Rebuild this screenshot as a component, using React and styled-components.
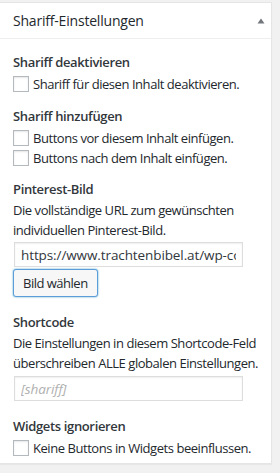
import * as React from "react"
import styled, { createGlobalStyle } from "styled-components"

const Global = createGlobalStyle`
  html, body {
    margin: 0;
    padding: 0;
    background: #f1f1f1;
  }
  body {
    font-family: "Open Sans", "Noto Sans", sans-serif;
    color: #23282d;
  }
`

const Page = styled.div`
  padding: 2px 8px 0 0;
  width: 280px;
  height: 473px;
  box-sizing: border-box;
`

const Panel = styled.section`
  background: #fff;
  border: 1px solid #e5e5e5;
  border-left: none;
  box-shadow: 0 1px 1px rgba(0, 0, 0, 0.04);
  height: 462px;
  box-sizing: border-box;
`

const Header = styled.header`
  display: flex;
  align-items: center;
  justify-content: space-between;
  height: 35px;
  padding: 0 6px 0 13px;
  border-bottom: 1px solid #eee;
`

const Title = styled.h2`
  margin: 0;
  font-size: 14px;
  font-weight: 400;
  letter-spacing: -0.2px;
`

const Toggle = styled.svg`
  width: 8px;
  height: 6px;
`

const Body = styled.div`
  padding: 13px 4px 0 13px;
  display: flex;
  flex-direction: column;
`

const Group = styled.div`
  display: flex;
  flex-direction: column;
  margin-bottom: ${p => p.$gap || 12}px;
`

const Heading = styled.h3`
  margin: 0 0 1px;
  font-size: 13px;
  font-weight: 600;
  line-height: 20px;
  letter-spacing: -0.35px;
  color: #32373c;
`

const Desc = styled.p`
  margin: 0;
  font-size: 13px;
  line-height: 20px;
  color: #23282d;
  letter-spacing: -0.45px;
`

const Checks = styled.div`
  display: flex;
  flex-direction: column;
  margin-top: 1px;
`

const CheckRow = styled.label`
  display: flex;
  align-items: center;
  gap: 4px;
  height: 20px;
  font-size: 13px;
  letter-spacing: -0.45px;
`

const Box = styled.span`
  width: 16px;
  height: 16px;
  box-sizing: border-box;
  border: 1px solid #b4b9be;
  background: #fff;
  box-shadow: inset 0 1px 2px rgba(0, 0, 0, 0.1);
  flex-shrink: 0;
`

const Field = styled.input`
  width: 229px;
  height: 25px;
  margin: ${p => p.$top || 2}px 0 0 1px;
  box-sizing: border-box;
  border: 1px solid #ddd;
  box-shadow: inset 0 1px 2px rgba(0, 0, 0, 0.07);
  padding: 0 6px;
  font-family: inherit;
  font-size: 13.5px;
  letter-spacing: -0.1px;
  color: #32373c;
  background: #fff;
  outline: none;

  &::placeholder {
    color: #b0b0b0;
    font-style: italic;
  }
`

const Button = styled.button`
  align-self: flex-start;
  height: 28px;
  padding: 0 9px;
  margin-top: 2px;
  font-family: inherit;
  font-size: 13px;
  letter-spacing: -0.5px;
  color: #23282d;
  background: #f7f7f7;
  border: 1px solid #5b9dd9;
  border-radius: 3px;
  box-shadow: 0 0 2px rgba(30, 140, 190, 0.8);
`

function Check({ children }) {
  return (
    <CheckRow>
      <Box />
      {children}
    </CheckRow>
  )
}

export default function App() {
  return (
    <Page>
      <Global />
      <Panel>
        <Header>
          <Title>Shariff-Einstellungen</Title>
          <Toggle viewBox="0 0 8 6">
            <path d="M4 0.5 L7.5 5.5 L0.5 5.5 Z" fill="#72777c" />
          </Toggle>
        </Header>
        <Body>
          <Group $gap={12}>
            <Heading>Shariff deaktivieren</Heading>
            <Checks>
              <Check>Shariff für diesen Inhalt deaktivieren.</Check>
            </Checks>
          </Group>
          <Group $gap={11}>
            <Heading>Shariff hinzufügen</Heading>
            <Checks>
              <Check>Buttons vor diesem Inhalt einfügen.</Check>
              <Check>Buttons nach dem Inhalt einfügen.</Check>
            </Checks>
          </Group>
          <Group $gap={15}>
            <Heading>Pinterest-Bild</Heading>
            <Desc>Die vollständige URL zum gewünschten individuellen Pinterest-Bild.</Desc>
            <Field readOnly defaultValue="https://www.trachtenbibel.at/wp-content/uploads/pin.jpg" />
            <Button>Bild wählen</Button>
          </Group>
          <Group $gap={15}>
            <Heading>Shortcode</Heading>
            <Desc>Die Einstellungen in diesem Shortcode-Feld überschreiben ALLE globalen Einstellungen.</Desc>
            <Field $top={3} placeholder="[shariff]" />
          </Group>
          <Group>
            <Heading>Widgets ignorieren</Heading>
            <Checks>
              <Check>Keine Buttons in Widgets beeinflussen.</Check>
            </Checks>
          </Group>
        </Body>
      </Panel>
    </Page>
  )
}
